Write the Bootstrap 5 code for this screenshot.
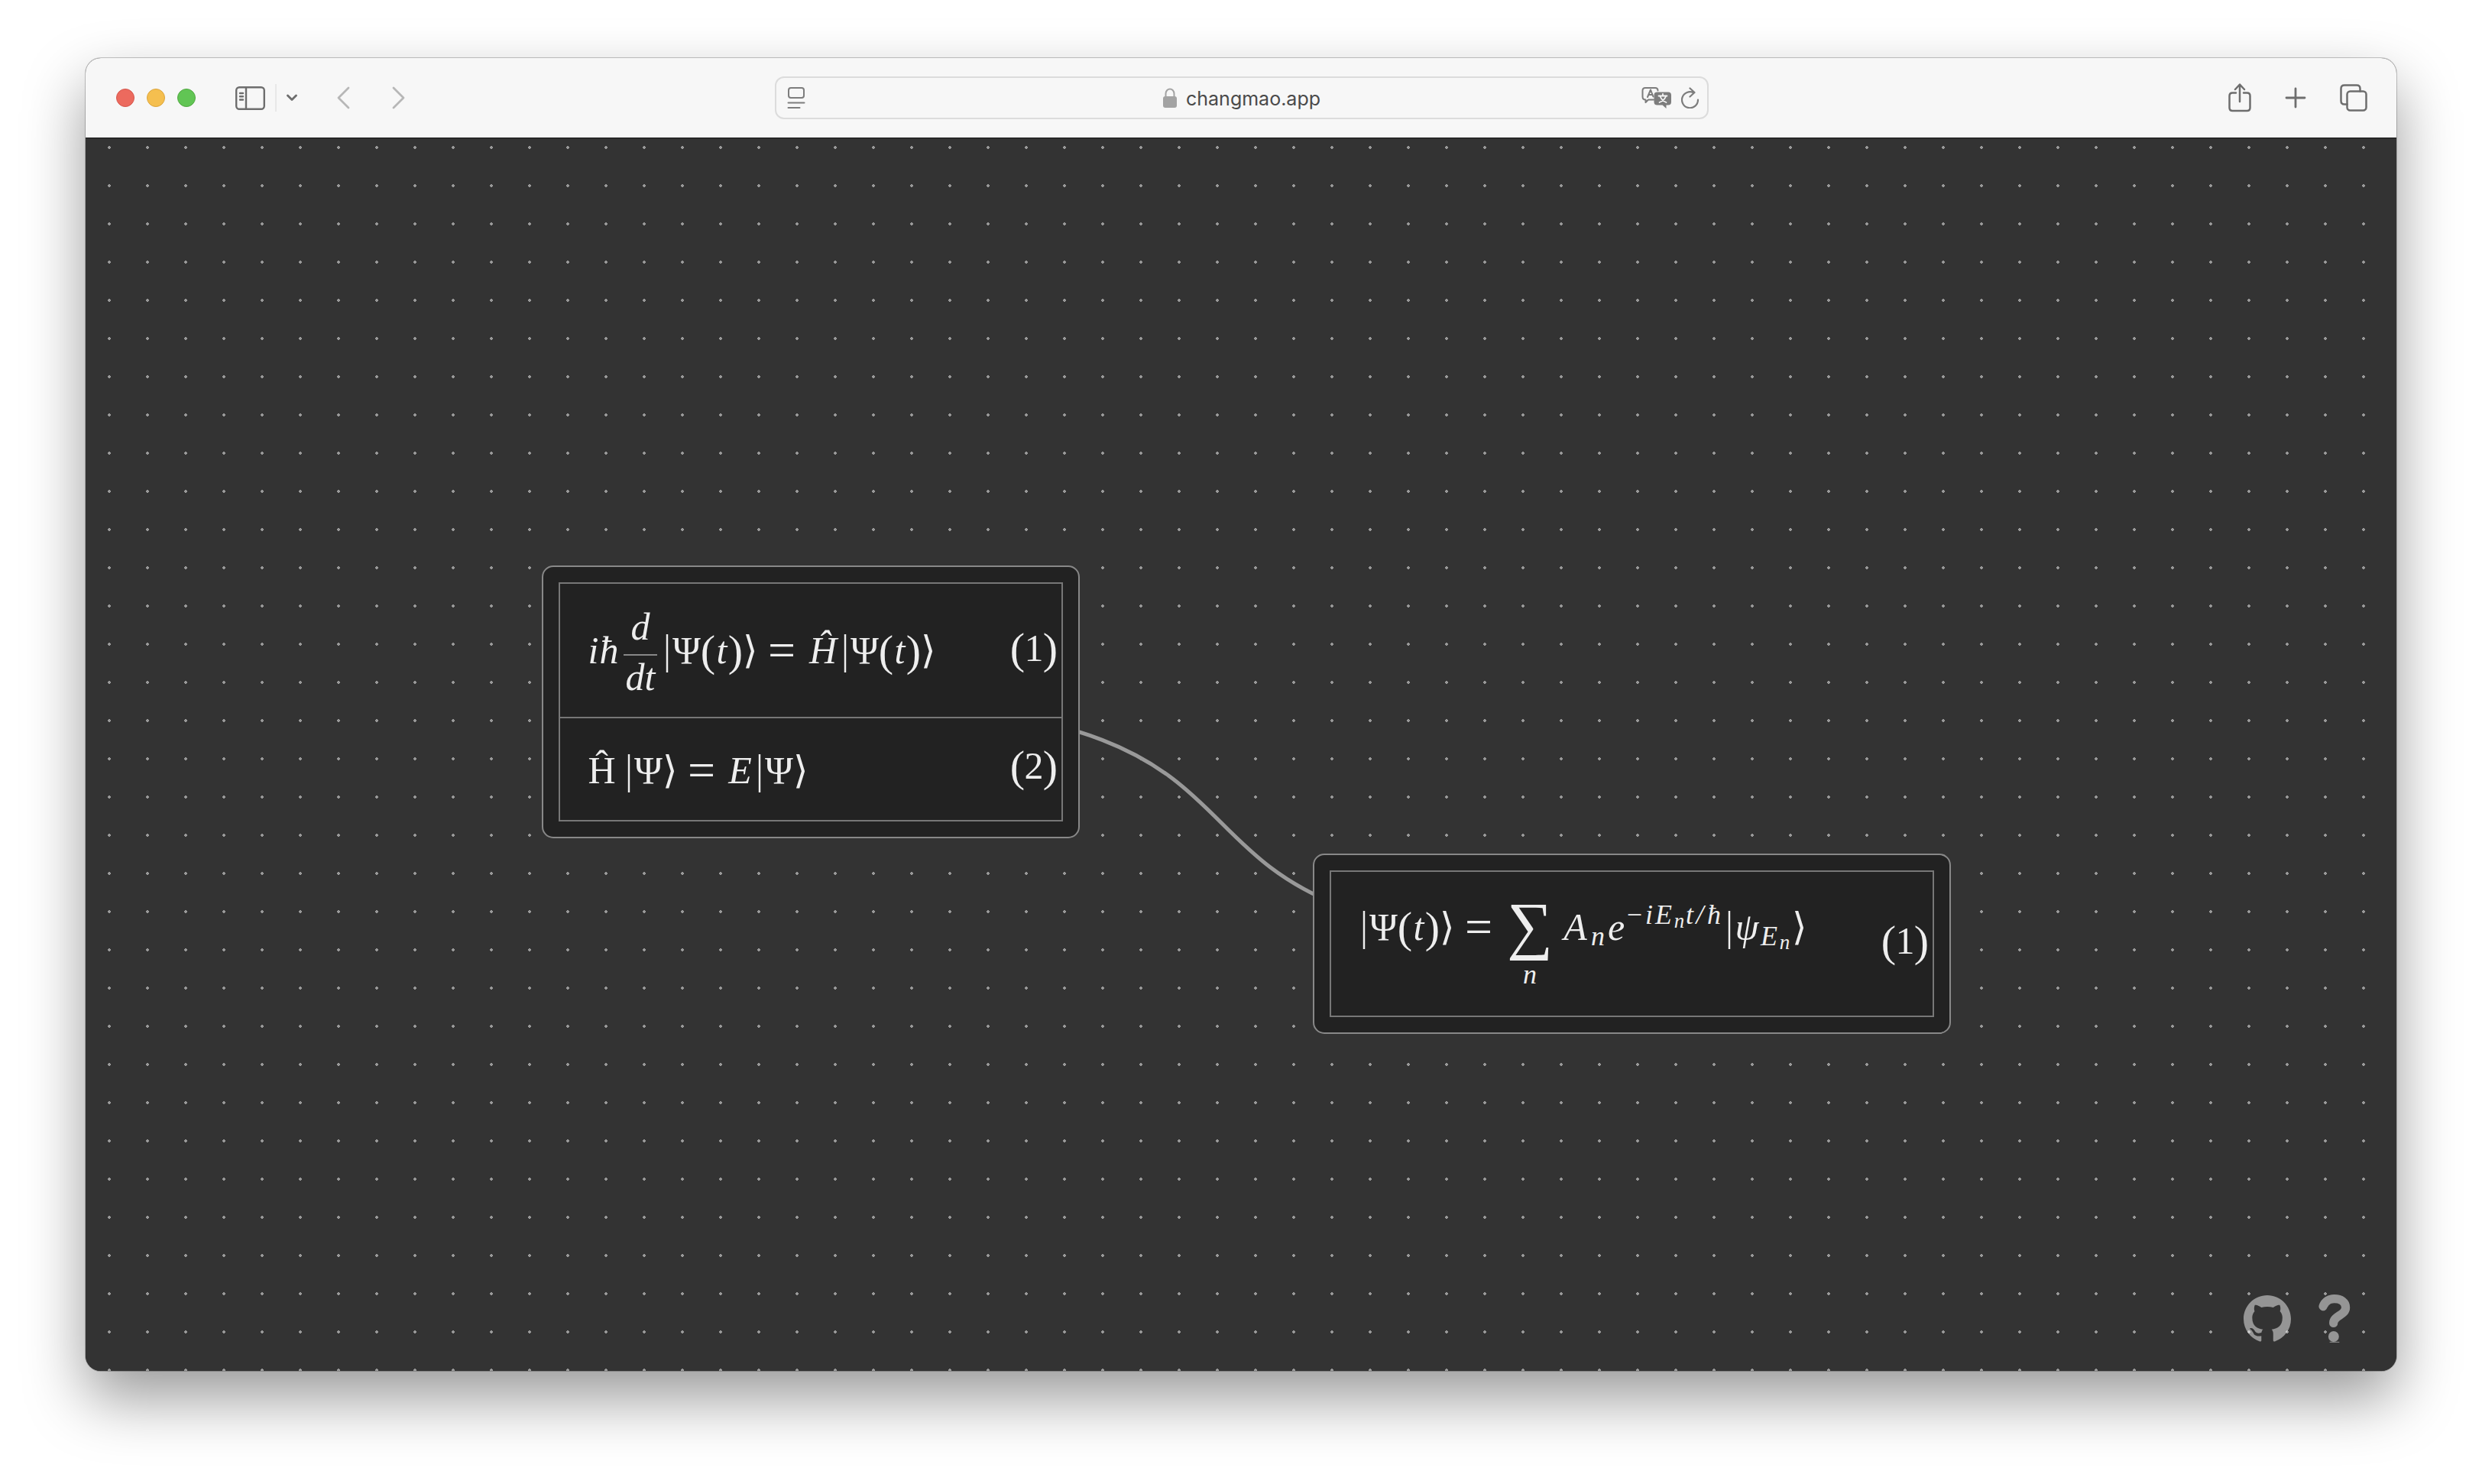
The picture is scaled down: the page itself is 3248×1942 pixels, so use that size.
<!DOCTYPE html>
<html lang="en">
<head>
<meta charset="utf-8">
<meta name="viewport" content="width=device-width, initial-scale=1">
<title>changmao.app</title>
<link rel="stylesheet" href="https://cdn.jsdelivr.net/npm/bootstrap@5.3.0/dist/css/bootstrap.min.css">
<script src="https://cdn.jsdelivr.net/npm/bootstrap@5.3.0/dist/js/bootstrap.bundle.min.js"></script>
<style>
  body { background: #fff; font-family: Inter, "Liberation Sans", sans-serif; padding: 76px 112px 148px; }
  .browser { border-radius: 20px; background: #333; box-shadow: 0 0 0 1px rgba(0,0,0,.22), 0 36px 80px rgba(0,0,0,.4); }
  .toolbar { height: 104px; background: #f7f7f7; color: #6e6e6e; padding: 0 38px 0 40px; border-radius: 20px 20px 0 0; }
  .toolbar svg, .tools svg { display: block; fill: none; stroke: currentColor; stroke-linecap: round; stroke-linejoin: round; }
  .toolbar button, .tools a { color: inherit; line-height: 1; }
  .light { width: 24px; height: 24px; border-radius: 50%; border: 1px solid; padding: 0; }
  .light-close { background: #ec6a5e; border-color: #d5574d; }
  .light-min { background: #f5bf4f; border-color: #dca53c; }
  .light-max { background: #61c554; border-color: #52a842; }
  .lights { gap: 16px; margin-right: 52px; }
  .split { width: 2px; height: 36px; background: #e8e8e8; margin: 0 13px; }
  .nav-arrow { color: #b7b7b7; }
  .arrows { gap: 55px; margin-left: 52px; }
  .address { width: 41.5%; height: 56px; border: 2px solid #dcdcdc; border-radius: 12px; padding: 0 10px 0 14px; color: #7d7d7d; }
  .address input { width: 180px; border: 0; padding: 2px 0 0; background: transparent; color: #4a4a4a; font-size: 25px; line-height: 32px; outline: 0; }
  .actions { gap: 44px; }

  .canvas { border-top: 1px solid #111; border-radius: 0 0 20px 20px;
    background: radial-gradient(circle, #999 2px, transparent 2px) 6px -13px / 50px 50px #333; }
  .edges { fill: none; stroke: #999; stroke-width: 5; }
  .node { background: #222; border: 2px solid #888; border-radius: 15px; padding: 20px; }
  .node-a { left: 597px; top: 559px; }
  .node-b { left: 1606px; top: 936px; }
  .eqs { border: 2px solid #777; color: #eee; }
  .eqs li { padding: 34px 5px 32px 36px; gap: 98px; }
  .eqs li + li { border-top: 2px solid #777; }
  .eqs li.has-frac { padding-top: 28px; padding-bottom: 24px; }
  .eqs li.has-sum { padding-top: 38px; padding-bottom: 36px; }

  .eqn { font: 50px/56px "Liberation Serif", serif; white-space: nowrap; }
  .eqno { padding-bottom: 10px; }
  .v { display: inline-flex; justify-content: center; font-style: italic; }
  .g { display: inline-flex; justify-content: center; }
  .p { display: inline-flex; justify-content: center; width: 19px; font-size: 58px; vertical-align: -3px; }
  .bar { display: inline-flex; justify-content: center; width: 14px; font-family: "DejaVu Sans", sans-serif; font-weight: 200; }
  .ket { display: inline-flex; justify-content: center; width: 19px; font-family: "DejaVu Sans", sans-serif; font-weight: 200; }
  .eqs .rel { display: inline-flex; justify-content: center; width: 64px; font-size: 64px; vertical-align: -4px; }
  .w10 { width: 10px; } .w12 { width: 12px; } .w15 { width: 15px; } .w17 { width: 17px; } .w22 { width: 22px; } .w24 { width: 24px; } .w26 { width: 26px; }
  .w32 { width: 32px; } .w37 { width: 37px; } .w44 { width: 44px; }
  .frac { display: inline-flex; flex-direction: column; align-items: center; width: 44px; margin: 0 6px; vertical-align: 31px; }
  .num { align-self: stretch; text-align: center; padding-bottom: 8px; border-bottom: 2px solid #888; font-style: italic; }
  .den { font-style: italic; }
  .sum { display: inline-flex; flex-direction: column; align-items: center; width: 70px; margin-right: 6px; vertical-align: -9px; }
  .sigma { font-size: 84px; line-height: 56px; }
  .lim, .script { font-size: 36px; line-height: 36px; }
  .lim { font-style: italic; margin-top: 18px; }
  .script { display: inline-block; margin-right: 2px; }
  .up { vertical-align: 21px; }
  .down { vertical-align: -7px; }
  .tiny { font-size: 27px; line-height: 26px; vertical-align: -5px; }

  .tools { right: 60px; bottom: 37px; gap: 36px; color: #fff; opacity: .48; }
</style>
</head>
<body class="vh-100">
<div class="browser d-flex flex-column h-100">
  <header class="toolbar d-flex align-items-center flex-shrink-0">
    <div class="d-flex align-items-center flex-fill w-25">
      <div class="lights d-flex">
        <button class="light light-close" aria-label="Close"></button>
        <button class="light light-min" aria-label="Minimise"></button>
        <button class="light light-max" aria-label="Zoom"></button>
      </div>
      <button class="btn border-0 p-0" aria-label="Sidebar">
        <svg width="39" height="31" viewBox="0 0 39 31" stroke-width="2.4"><rect x="1.2" y="1.2" width="36.6" height="28.6" rx="4"/><path d="M14 1.5V29.500M6 9h4M6 13.200h4M6 17.500h4"/></svg>
      </button>
      <span class="split"></span>
      <button class="btn border-0 p-0" aria-label="Tab groups">
        <svg width="14" height="10" viewBox="0 0 14 10" stroke-width="2.800"><path d="M1.500 2l5.500 5.500L12.500 2"/></svg>
      </button>
      <div class="arrows nav-arrow d-flex">
        <button class="btn border-0 p-0" aria-label="Back"><svg width="17" height="30" viewBox="0 0 17 30" stroke-width="2.800"><path d="M15 2L2 15l13 13"/></svg></button>
        <button class="btn border-0 p-0" aria-label="Forward"><svg width="17" height="30" viewBox="0 0 17 30" stroke-width="2.800"><path d="M2 2l13 13L2 28"/></svg></button>
      </div>
    </div>
    <div class="address d-flex align-items-center flex-shrink-0">
      <div class="flex-fill w-25">
        <button class="btn border-0 p-0" aria-label="Reader"><svg width="24" height="28" viewBox="0 0 24 28" stroke-width="2"><rect x="2" y="1" width="20" height="13" rx="3"/><path d="M1.500 20.500h21M1.500 27h15"/></svg></button>
      </div>
      <label class="d-flex align-items-center">
        <svg width="18" height="26" viewBox="0 0 18 26" class="me-2" role="img" aria-label="Secure"><path d="M3.500 12V7.500a5.500 6 0 0 1 11 0V12" stroke="#a3a3a3" stroke-width="2"/><rect y="11" width="18" height="15" rx="3" fill="#a3a3a3" stroke="none"/></svg>
        <input type="text" class="ms-1" value="changmao.app" aria-label="Address">
      </label>
      <div class="d-flex flex-fill w-25 justify-content-end align-items-center">
        <button class="btn border-0 p-0 me-2" aria-label="Translate">
          <svg width="40" height="30" viewBox="0 0 40 30" stroke-width="2"><path d="M16 17.500l-7 0-3.500 3.500v-3.500C2.500 17.500 1.500 16 1.500 13.500V5.500Q1.500 2 5 2H18Q21.500 2 21.500 5.500"/><path d="M8 14l4-9.500 3.500 9M9.500 11H14"/><path d="M20.500 7.500H35q4 0 4 4v9q0 4-4 4h-2.500v4.500l-5-4.500h-7q-4 0-4-4v-9q0-4 4-4z" fill="currentColor" stroke="none"/><path d="M22.500 12.500h11M28 10v2.500M32 13c-1.500 4-4.500 6.500-8.500 8M24.500 13c1.500 4 4 6.500 8 8" stroke="#f7f7f7" stroke-width="1.800"/></svg>
        </button>
        <button class="btn border-0 p-0 ms-1" aria-label="Reload">
          <svg width="24" height="28" viewBox="0 0 24 28" stroke-width="2.200"><path d="M22 16.500A10.500 10.500 0 1 1 16.500 7.500M11.500 1.500l6 5.500-6 5.500"/></svg>
        </button>
      </div>
    </div>
    <div class="actions d-flex flex-fill w-25 justify-content-end align-items-center">
      <button class="btn border-0 p-0" aria-label="Share"><svg width="30" height="38" viewBox="0 0 30 38" stroke-width="2.500"><path d="M10 12.500H5.500Q1.500 12.500 1.500 16.500v15.500q0 4 4 4h19q4 0 4-4V16.500q0-4-4-4H20M15 24V2M9 8l6-6.500L21 8"/></svg></button>
      <button class="btn border-0 p-0" aria-label="New tab"><svg width="28" height="28" viewBox="0 0 28 28" stroke-width="2.800"><path d="M14 2v24M2 14h24"/></svg></button>
      <button class="btn border-0 p-0" aria-label="Tabs"><svg width="36" height="36" viewBox="0 0 36 36" stroke-width="2.500"><rect x="9.500" y="9.500" width="25" height="25" rx="4"/><path d="M9.500 26.500H6q-4.500 0-4.500-4.500V6Q1.500 1.500 6 1.500H22q4.500 0 4.500 4.500V9.500"/></svg></button>
    </div>
  </header>

  <main class="canvas position-relative flex-grow-1 overflow-hidden">
    <svg class="edges position-absolute top-0 start-0 w-100 h-100" aria-hidden="true"><path d="M949 738C1708 738 1265 1054 2024 1054"/></svg>

    <section class="node node-a position-absolute">
      <ul class="eqs list-unstyled m-0">
        <li class="has-frac d-flex align-items-center justify-content-between">
          <div class="eqn"><span class="v w15">i</span><span class="v w26">ħ</span><span class="frac"><span class="num">d</span><span class="den">dt</span></span><span class="bar">|</span><span class="g w37">Ψ</span><span class="p">(</span><span class="v w17">t</span><span class="p">)</span><span class="ket">⟩</span><span class="rel">=</span><span class="v w44">Ĥ</span><span class="bar">|</span><span class="g w37">Ψ</span><span class="p">(</span><span class="v w17">t</span><span class="p">)</span><span class="ket">⟩</span></div>
          <div class="eqn eqno"><span class="p">(</span><span class="g w24">1</span><span class="p">)</span></div>
        </li>
        <li class="d-flex align-items-center justify-content-between">
          <div class="eqn"><span class="g w37">Ĥ</span><span class="g w10"></span><span class="bar">|</span><span class="g w37">Ψ</span><span class="ket">⟩</span><span class="rel">=</span><span class="v w37">E</span><span class="bar">|</span><span class="g w37">Ψ</span><span class="ket">⟩</span></div>
          <div class="eqn eqno"><span class="p">(</span><span class="g w24">2</span><span class="p">)</span></div>
        </li>
      </ul>
    </section>

    <section class="node node-b position-absolute">
      <ul class="eqs list-unstyled m-0">
        <li class="has-sum d-flex align-items-center justify-content-between">
          <div class="eqn"><span class="bar">|</span><span class="g w37">Ψ</span><span class="p">(</span><span class="v w17">t</span><span class="p">)</span><span class="ket">⟩</span><span class="rel">=</span><span class="sum"><span class="sigma">∑</span><span class="lim">n</span></span><span class="v w37">A</span><span class="script down"><span class="v w22">n</span></span><span class="v w22">e</span><span class="script up"><span class="g w26">−</span><span class="v w12">i</span><span class="v w26">E</span><span class="v w15 tiny">n</span><span class="v w12">t</span><span class="v w15">/</span><span class="v w22">ħ</span></span><span class="bar">|</span><span class="v w32">ψ</span><span class="script down"><span class="v w26">E</span><span class="v w15 tiny">n</span></span><span class="ket">⟩</span></div>
          <div class="eqn eqno"><span class="p">(</span><span class="g w24">1</span><span class="p">)</span></div>
        </li>
      </ul>
    </section>

    <nav class="tools position-absolute d-flex align-items-center" aria-label="Links">
      <a href="#github" aria-label="GitHub"><svg width="62" height="62" viewBox="0 0 16 16"><path fill="currentColor" stroke="none" d="M8 0C3.580 0 0 3.580 0 8c0 3.540 2.290 6.530 5.470 7.590.4.070.55-.17.55-.38 0-.19-.01-.82-.01-1.490-2.010.37-2.530-.49-2.690-.94-.09-.23-.48-.94-.82-1.130-.28-.15-.68-.52-.01-.53.63-.01 1.080.58 1.230.82.72 1.210 1.870.87 2.330.66.070-.52.28-.87.51-1.070-1.780-.2-3.640-.89-3.640-3.950 0-.87.31-1.590.82-2.150-.08-.2-.36-1.020.08-2.120 0 0 .67-.21 2.200.82.64-.18 1.320-.27 2-.27s1.360.09 2 .27c1.530-1.040 2.200-.82 2.200-.82.44 1.100.16 1.920.08 2.120.51.56.82 1.270.82 2.150 0 3.070-1.870 3.750-3.650 3.950.29.25.54.73.54 1.480 0 1.070-.01 1.930-.01 2.200 0 .21.15.46.55.38A8.010 8.010 0 0 0 16 8c0-4.420-3.580-8-8-8"/></svg></a>
      <a href="#help" aria-label="Help"><svg width="42" height="63" viewBox="462 131 126 190"><path stroke-width="34" d="M480 178C487 157 505 148 524 148C551 148 569 161 569 182C569 214 521 214 521 244"/><circle cx="521.500" cy="297" r="21" fill="currentColor" stroke="none"/><path d="M507 319h36" stroke-width="3"/></svg></a>
    </nav>
  </main>
</div>
</body>
</html>
